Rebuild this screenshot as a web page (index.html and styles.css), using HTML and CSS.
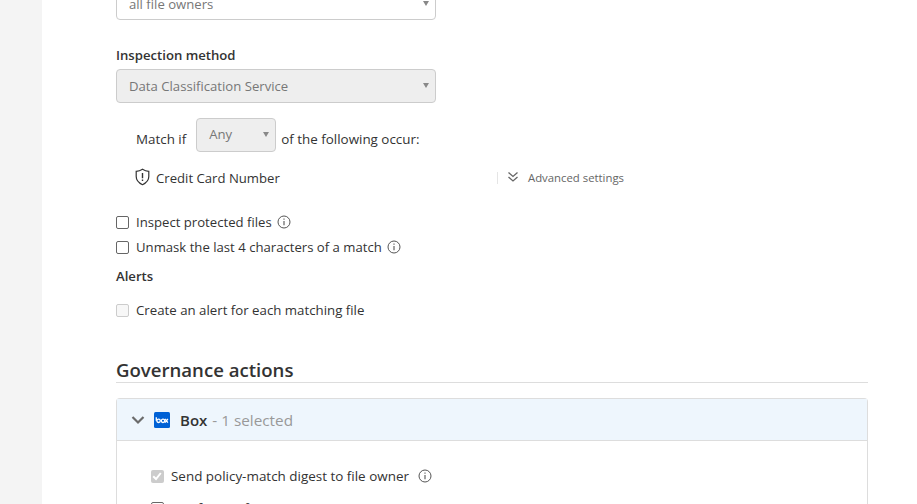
FILE: index.html
```html
<!DOCTYPE html>
<html lang="en">
<head>
<meta charset="utf-8">
<title>Policy</title>
<link rel="stylesheet" href="styles.css">
</head>
<body>
<div class="page">
  <aside class="rail"></aside>
  <main class="content">
    <div class="select owners"><span>all file owners</span><i class="caret"></i></div>
    <label class="field-label">Inspection method</label>
    <div class="select disabled"><span>Data Classification Service</span><i class="caret"></i></div>
    <div class="match-row">
      <span class="match-text first">Match if</span>
      <div class="select small disabled"><span>Any</span><i class="caret"></i></div>
      <span class="match-text">of the following occur:</span>
    </div>
    <div class="rule-row">
      <div class="rule-name">
        <svg class="shield" width="17" height="18" viewBox="0 0 17 18" fill="none" stroke="#333" stroke-width="1.2"><path d="M8.5 1.2c1.8 1.2 4 2 6.3 2.1v5.2c0 3.6-2.5 6.4-6.3 8.200-3.800-1.800-6.300-4.600-6.300-8.200V3.300c2.300-.1 4.500-.9 6.300-2.100z"/><path d="M8.500 5v5.200M8.500 11.600v1.400" stroke-width="1.400"/></svg>
        <span>Credit Card Number</span>
      </div>
      <div class="advanced">
        <svg width="12" height="12" viewBox="0 0 12 12" fill="none" stroke="#666" stroke-width="1.300"><path d="M1.500 1.500 6 5.500l4.500-4M1.500 6 6 10l4.500-4"/></svg>
        <span>Advanced settings</span>
      </div>
    </div>
    <div class="check-row"><span class="box"></span><span>Inspect protected files</span><svg class="info" width="14" height="14" viewBox="0 0 14 14"><circle cx="7" cy="7" r="6" fill="none" stroke="#555"/><path d="M7 6v4.200M7 3.600v1.200" stroke="#555" stroke-width="1.100"/></svg></div>
    <div class="check-row second"><span class="box"></span><span>Unmask the last 4 characters of a match</span><svg class="info" width="14" height="14" viewBox="0 0 14 14"><circle cx="7" cy="7" r="6" fill="none" stroke="#555"/><path d="M7 6v4.200M7 3.600v1.200" stroke="#555" stroke-width="1.100"/></svg></div>
    <div class="field-label alerts">Alerts</div>
    <div class="check-row alert"><span class="box off"></span><span>Create an alert for each matching file</span></div>
    <h2 class="section-title">Governance actions</h2>
    <section class="panel">
      <header class="panel-head">
        <svg class="chev" width="14" height="10" viewBox="0 0 14 10" fill="none" stroke="#6b6b6b" stroke-width="2.200"><path d="M1.500 2 7 7.500 12.500 2"/></svg>
        <svg class="box-logo" width="16" height="16" viewBox="0 0 16 16"><rect width="16" height="16" rx="1.500" fill="#0061d5"/><g fill="none" stroke="#fff" stroke-width="1.300"><circle cx="4.600" cy="8.800" r="1.700"/><circle cx="9" cy="8.800" r="1.700"/><path d="M2.900 5.300v3.500M11.500 7l3 3.600M14.500 7l-3 3.600" transform="translate(-.6 0)"/></g></svg>
        <span class="panel-name">Box</span>
        <span class="panel-count">- 1 selected</span>
      </header>
      <div class="panel-body">
        <div class="check-row digest"><span class="box checked"><svg width="12" height="12" viewBox="0 0 12 12" fill="none" stroke="#fff" stroke-width="2"><path d="M2.200 6.200 5 9l4.800-6"/></svg></span><span>Send policy-match digest to file owner</span><svg class="info wide" width="14" height="14" viewBox="0 0 14 14"><circle cx="7" cy="7" r="6" fill="none" stroke="#555"/><path d="M7 6v4.200M7 3.600v1.200" stroke="#555" stroke-width="1.100"/></svg></div>
        <div class="check-row notify"><span class="box"></span><span>Notify specific users</span></div>
      </div>
    </section>
  </main>
</div>
</body>
</html>
```
FILE: styles.css
```css
* { box-sizing: border-box; }
html, body { margin: 0; height: 100%; overflow: hidden; background: #fff; }
body { font-family: "Open Sans", "Noto Sans", sans-serif; font-size: 13.15px; color: #333; }
.page { display: flex; height: 504px; overflow: hidden; }
.rail { width: 42px; flex: none; background: #f4f4f4; }
.content { width: 826px; margin-left: 74px; flex: none; margin-top: -12px; }
.select { position: relative; width: 320px; height: 32px; border: 1px solid #ccc; border-radius: 4px; padding: 0 12px; display: flex; align-items: center; color: #777; background: #fff; }
.owners span { margin-top: -1px; }
.select.disabled { background: #eee; height: 34px; }
.caret { position: absolute; right: 6px; top: 50%; margin-top: -3px; border: 3.500px solid transparent; border-top: 5px solid #888; border-bottom: 0; }
.field-label { display: block; font-weight: 600; line-height: 18px; color: #333; }
.owners { margin-bottom: 26px; }
.owners + .field-label { margin-bottom: 5px; }
.match-row { display: flex; align-items: flex-start; gap: 5px; margin: 15px 0 0 20px; height: 34px; }
.match-text { margin-top: 12px; line-height: 18px; font-size: 13.4px; }
.match-text.first { margin-right: 5px; }
.select.small { width: 80px; padding-bottom: 2px; }
.rule-row { display: flex; align-items: center; margin: 17px 0 0 19px; height: 18px; }
.rule-name { width: 362px; display: flex; align-items: center; gap: 5px; height: 18px; }
.shield { flex: none; margin-top: -2px; margin-left: -1px; }
.advanced { display: flex; align-items: center; gap: 9px; border-left: 1px solid #e5e5e5; height: 12px; padding-left: 9px; font-size: 11.35px; color: #666; }
.advanced span { margin-top: -1px; }
.advanced svg { margin-top: -2px; }
.check-row { display: flex; align-items: center; height: 18px; }
.box { width: 13px; height: 13px; border: 1px solid #666; border-radius: 2px; margin-right: 7px; flex: none; background: #fff; display: flex; }
.box.off { border-color: #ccc; background: #f7f7f7; }
.box.checked { border: 0; background: #ccc; }
.info { margin-left: 5px; }
.info.wide { margin-left: 9px; }
.rule-row + .check-row { margin-top: 26px; }
.second { margin-top: 7px; }
.alerts { margin-top: 11px; }
.alert { margin-top: 16px; font-size: 13.25px; }
.section-title { margin: 39px 0 0; font-size: 18.6px; font-weight: 600; line-height: 24px; height: 25px; width: 752px; border-bottom: 1px solid #ddd; color: #333; }
.panel { width: 752px; margin-top: 15px; border: 1px solid #ddd; border-bottom: 0; border-radius: 4px 4px 0 0; height: 200px; }
.panel-head { height: 42px; background: #eef6fd; border-bottom: 1px solid #ddd; display: flex; align-items: center; padding-left: 14px; }
.chev { margin-right: 9px; }
.box-logo { margin-right: 10px; }
.panel-name { font-size: 15px; font-weight: 600; margin-right: 5px; }
.panel-count { font-size: 15.3px; color: #999; }
.panel-body { padding: 26px 0 0 34px; font-size: 13.45px; }
.notify { margin-top: 14px; }
```
